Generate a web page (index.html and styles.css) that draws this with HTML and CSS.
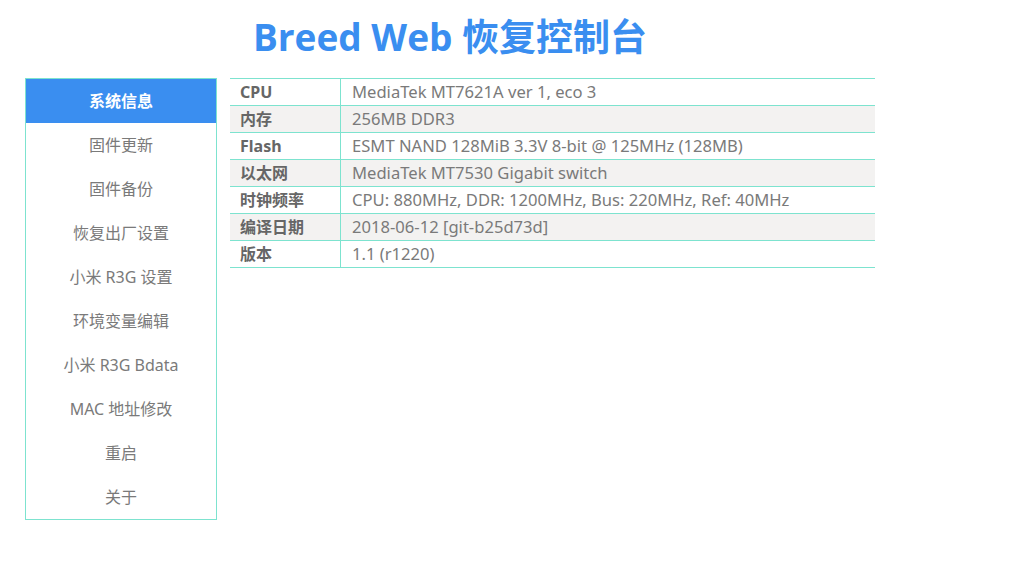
FILE: index.html
```html
<!DOCTYPE html>
<html>
<head>
<meta charset="utf-8">
<link rel="stylesheet" href="styles.css">
</head>
<body>
<div class="page">
  <h1 class="title">Breed Web 恢复控制台</h1>
  <div class="main">
    <ul class="menu">
      <li class="active">系统信息</li>
      <li>固件更新</li>
      <li>固件备份</li>
      <li>恢复出厂设置</li>
      <li>小米 R3G 设置</li>
      <li>环境变量编辑</li>
      <li>小米 R3G Bdata</li>
      <li>MAC 地址修改</li>
      <li>重启</li>
      <li>关于</li>
    </ul>
    <table class="info">
      <tr><th>CPU</th><td>MediaTek MT7621A ver 1, eco 3</td></tr>
      <tr><th>内存</th><td>256MB DDR3</td></tr>
      <tr><th>Flash</th><td>ESMT NAND 128MiB 3.3V 8-bit @ 125MHz (128MB)</td></tr>
      <tr><th>以太网</th><td>MediaTek MT7530 Gigabit switch</td></tr>
      <tr><th>时钟频率</th><td>CPU: 880MHz, DDR: 1200MHz, Bus: 220MHz, Ref: 40MHz</td></tr>
      <tr><th>编译日期</th><td>2018-06-12 [git-b25d73d]</td></tr>
      <tr><th>版本</th><td>1.1 (r1220)</td></tr>
    </table>
  </div>
</div>
</body>
</html>
```
FILE: styles.css
```css
html, body {
  margin: 0;
  padding: 0;
  background: #fff;
}
body {
  font-family: "Noto Sans", "Noto Sans CJK SC", sans-serif;
  color: #7a7a7a;
}
.page {
  width: 850px;
  margin-left: 25px;
}
.title {
  margin: 0;
  padding-top: 12px;
  height: 78px;
  box-sizing: border-box;
  text-align: center;
  font-family: "Open Sans", "Noto Sans CJK SC", sans-serif;
  font-size: 37px;
  line-height: 50px;
  font-weight: 700;
  color: #3a8ef0;
}
.main {
  display: flex;
  align-items: flex-start;
  gap: 13px;
}
.menu {
  list-style: none;
  margin: 0;
  padding: 0;
  width: 190px;
  border: 1px solid #7de3cf;
  flex: none;
}
.menu li {
  height: 44px;
  line-height: 44px;
  text-align: center;
  font-size: 16px;
  color: #7a7a7a;
}
.menu li.active {
  background: #3a8ef0;
  color: #fff;
  font-weight: 700;
}
.info {
  flex: 1;
  border-collapse: collapse;
  font-size: 16px;
}
.info tr {
  border-top: 1px solid #7de3cf;
  border-bottom: 1px solid #7de3cf;
}
.info tr:nth-child(even) {
  background: #f3f2f1;
}
.info th, .info td {
  height: 26px;
  padding: 0 0 0 10px;
  text-align: left;
  vertical-align: middle;
  line-height: 26px;
}
.info th {
  width: 100px;
  font-weight: 700;
  color: #666;
  border-right: 1px solid #7de3cf;
}
.info td {
  padding-left: 11px;
  font-size: 16.6px;
}
```
